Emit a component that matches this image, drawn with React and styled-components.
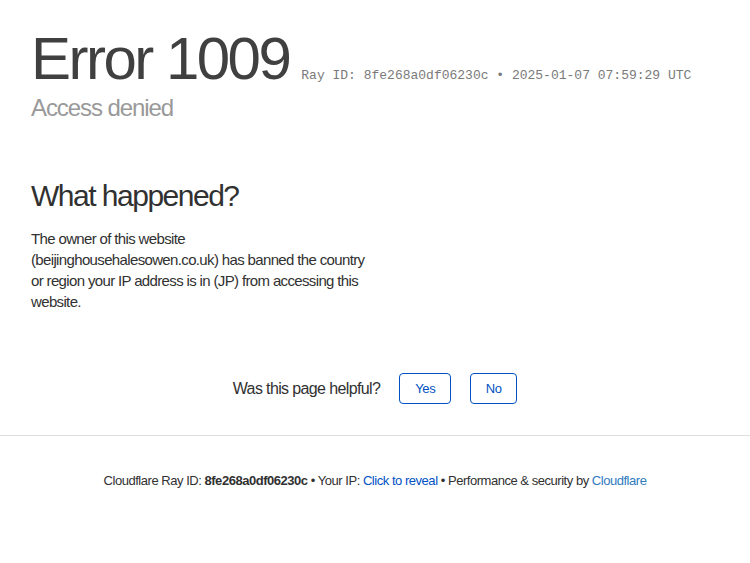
import React from "react";
import styled, { createGlobalStyle } from "styled-components";

const Global = createGlobalStyle`
  html, body { margin: 0; padding: 0; background: #fff; }
  body { font-family: "Liberation Sans", Arial, sans-serif; color: #313131; }
`;

const Page = styled.div`
  display: flex;
  flex-direction: column;
`;

const Header = styled.section`
  padding: 23px 31px 0;
`;

const TitleRow = styled.div`
  display: flex;
  align-items: baseline;
`;

const Title = styled.h1`
  margin: 0 12px 0 0;
  font-weight: 300;
  font-size: 60px;
  line-height: 1.2;
  letter-spacing: -0.042em;
  color: #404040;
`;

const RayInfo = styled.span`
  font-family: "Liberation Mono", monospace;
  font-size: 13px;
  color: #7a7a7a;
`;

const Subtitle = styled.h2`
  margin: -1px 0 0;
  font-weight: 300;
  font-size: 24px;
  letter-spacing: -0.045em;
  color: #999;
`;

const Section = styled.section`
  padding: 57px 31px 0;
`;

const Heading = styled.h2`
  margin: 0 0 15px;
  font-weight: 300;
  font-size: 30px;
  letter-spacing: -0.05em;
  color: #313131;
`;

const Para = styled.p`
  margin: 0;
  max-width: 337px;
  font-size: 15px;
  line-height: 21px;
  letter-spacing: -0.043em;
  color: #313131;
`;

const Feedback = styled.div`
  display: flex;
  justify-content: center;
  align-items: center;
  gap: 19px;
  padding: 61px 0 31px;
  border-bottom: 1px solid #dedede;
`;

const Question = styled.span`
  font-size: 16px;
  letter-spacing: -0.039em;
  color: #313131;
`;

const Btn = styled.button`
  font-family: "Liberation Sans", Arial, sans-serif;
  font-size: 13px;
  letter-spacing: -0.03em;
  color: #0051c3;
  background: #fff;
  border: 1px solid #0051c3;
  border-radius: 4px;
  height: 31px;
  width: ${(p) => p.$w}px;
  padding: 0;
`;

const Footer = styled.footer`
  text-align: center;
  font-size: 13px;
  letter-spacing: -0.036em;
  color: #313131;
  padding-top: 37px;
`;

const Strong = styled.strong`
  font-weight: 700;
`;

const Link = styled.a`
  color: ${(p) => (p.$light ? "#2f7bbf" : "#0051c3")};
  text-decoration: none;
`;

export default function App() {
  return (
    <Page>
      <Global />
      <Header>
        <TitleRow>
          <Title>Error 1009</Title>
          <RayInfo>Ray ID: 8fe268a0df06230c • 2025-01-07 07:59:29 UTC</RayInfo>
        </TitleRow>
        <Subtitle>Access denied</Subtitle>
      </Header>
      <Section>
        <Heading>What happened?</Heading>
        <Para>
          The owner of this website (beijinghousehalesowen.co.uk) has banned the
          country or region your IP address is in (JP) from accessing this
          website.
        </Para>
      </Section>
      <Feedback>
        <Question>Was this page helpful?</Question>
        <Btn $w={52}>Yes</Btn>
        <Btn $w={47}>No</Btn>
      </Feedback>
      <Footer>
        Cloudflare Ray ID: <Strong>8fe268a0df06230c</Strong> • Your IP:{" "}
        <Link href="#">Click to reveal</Link> • Performance &amp; security by{" "}
        <Link href="#" $light>Cloudflare</Link>
      </Footer>
    </Page>
  );
}
